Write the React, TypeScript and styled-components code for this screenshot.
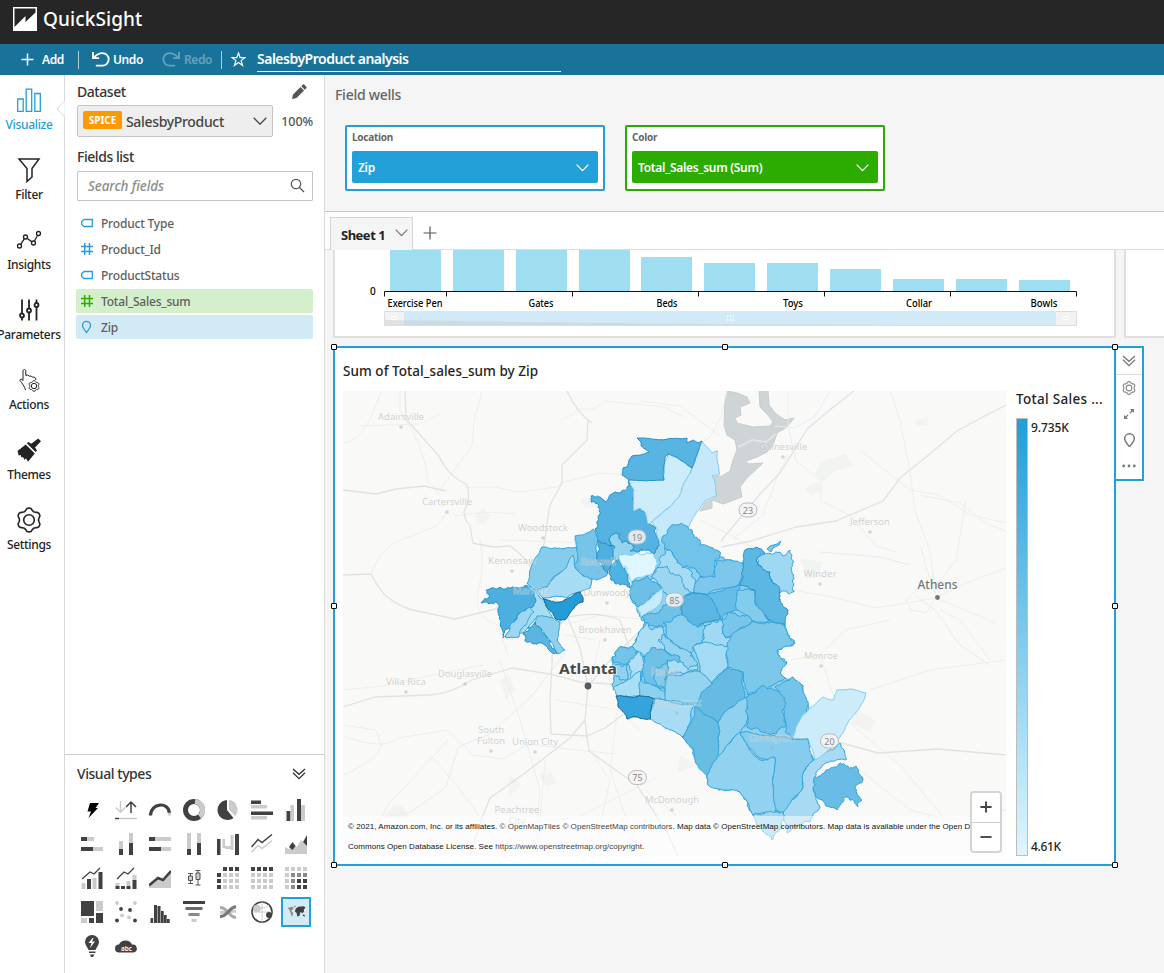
import React from 'react';
import styled, { createGlobalStyle } from 'styled-components';

const Global = createGlobalStyle`
  * { box-sizing: border-box; }
  body { margin: 0; background: #f5f5f5; font-family: "Noto Sans", "Open Sans", sans-serif; color: #232323; }
`;

const Page = styled.div`
  width: 1164px; height: 973px; overflow: hidden;
  display: flex; flex-direction: column;
`;
const Header = styled.header`
  height: 44px; flex: none; background: #262626; color: #fff;
  display: flex; align-items: center; gap: 6px; padding: 0 0 7px 13px;
`;
const Brand = styled.span`font-size: 19px; font-weight: 500; letter-spacing: 0.1px; line-height: 24px;`;
const Toolbar = styled.div`
  height: 31px; flex: none; background: #19729a; color: #fff;
  display: flex; align-items: center; font-size: 12px; font-weight: 600;
`;
const Tool = styled.div<{ $w: number; $pad: number; $gap: number; $dim?: boolean }>`
  width: ${p => p.$w}px; padding-left: ${p => p.$pad}px; gap: ${p => p.$gap}px;
  display: flex; align-items: center; letter-spacing: -0.4px; white-space: nowrap; padding-bottom: 1px;
  opacity: ${p => (p.$dim ? 0.33 : 1)};
`;
const Rule = styled.i`width: 1px; height: 18px; background: #b9c9d1;`;
const AnalysisName = styled.div`
  width: 304px; height: 26px; margin-left: 11px; margin-top: -1px; border-bottom: 1px solid #fff;
  font-size: 14px; font-weight: 600; letter-spacing: -0.5px; line-height: 26px;
`;
const Body = styled.div`flex: 1; display: flex; min-height: 0;`;

const Nav = styled.nav`width: 65px; flex: none; background: #fff; border-right: 1px solid #d9d9d9; position: relative;`;
const NavNotch = styled.svg`position: absolute; right: -1px; top: 25px;`;
const NavItem = styled.div<{ $on?: boolean }>`
  height: 70px; width: 58px; padding-top: 12px; display: flex; flex-direction: column; align-items: center;
  color: ${p => (p.$on ? '#239fd9' : '#232323')};
  svg { flex: none; }
`;
const NavLabel = styled.span`font-size: 12px; font-weight: 500; letter-spacing: -0.32px; line-height: 16px; margin-top: 4px; white-space: nowrap;`;

const Side = styled.aside`
  width: 260px; flex: none; background: #fff; border-right: 1px solid #d9d9d9;
  display: flex; flex-direction: column;
`;
const DataPanel = styled.section`height: 680px; border-bottom: 1px solid #ccc; padding: 6px 11px 0 12px; flex: none;`;
const Row = styled.div`display: flex; align-items: center; justify-content: space-between;`;
const DatasetHead = styled(Row)`padding-right: 6px; margin-bottom: 2px;`;
const TypesHead = styled(Row)`padding-right: 7px;`;
const PanelTitle = styled.h3<{ $mt?: number }>`
  margin: ${p => p.$mt ?? 0}px 0 0; font-size: 14px; font-weight: 500; letter-spacing: -0.45px; line-height: 22px; color: #333;
`;
const DatasetSelect = styled.div`
  width: 196px; height: 32px; background: #eee; border: 1px solid #c4c4c4; border-radius: 2px;
  display: flex; align-items: center; padding: 0 5px;
`;
const Spice = styled.span`
  width: 39px; height: 18px; background: #ff9900; color: #fff; border-radius: 2px; text-align: center;
  font-size: 10px; font-weight: 700; line-height: 18px; margin-top: -2px;
`;
const DatasetName = styled.span`flex: 1; margin-left: 4px; font-size: 14px; font-weight: 500; letter-spacing: -0.33px; color: #444;`;
const Percent = styled.span`font-size: 12.5px; font-weight: 500; letter-spacing: -0.1px; color: #555;`;
const Search = styled.div`
  height: 30px; border: 1px solid #c4c4c4; border-radius: 1px; margin-top: 3px; padding: 0 7px 1px 10px;
  display: flex; align-items: center; justify-content: space-between;
  font-style: italic; font-weight: 500; font-size: 13.5px; letter-spacing: -0.1px; color: #8c8c8c;
`;
const FieldList = styled.div`margin: 10px 0 0 -1px; display: flex; flex-direction: column; gap: 2px;`;
const FieldRow = styled.div<{ $bg?: string }>`
  height: 24px; border-radius: 2px; background: ${p => p.$bg ?? 'transparent'};
  display: flex; align-items: center; gap: 7px; padding-left: 4px;
  font-size: 12px; font-weight: 500; letter-spacing: -0.2px; color: #5e5e5e;
`;
const TypesPanel = styled.section`padding: 8px 11px 0 12px; flex: 1;`;
const TypeGrid = styled.div`
  display: grid; grid-template-columns: repeat(7, 34px); grid-auto-rows: 34px; margin: 8px 0 0 -2px;
`;
const TypeCell = styled.div<{ $on?: boolean }>`
  width: 30px; height: 30px; margin: 2px; display: flex; align-items: center; justify-content: center;
  background: ${p => (p.$on ? '#d3ebf7' : 'transparent')};
  border: ${p => (p.$on ? '2px solid #22a0d8' : '0')};
  svg { flex: none; }
`;

const Main = styled.main`flex: 1; min-width: 0; display: flex; flex-direction: column; overflow: hidden;`;
const Wells = styled.section`height: 137px; flex: none; border-bottom: 1px solid #c9c9c9; padding: 9px 10px 0;`;
const WellsTitle = styled.div`font-size: 14px; letter-spacing: -0.27px; line-height: 22px; color: #666; font-weight: 500;`;
const WellRow = styled.div`display: flex; gap: 20px; padding: 19px 0 0 10px;`;
const Well = styled.div<{ $c: string }>`
  width: 260px; height: 66px; background: #fff; border: 2px solid ${p => p.$c}; border-radius: 2px; padding: 2px 5px;
`;
const WellLabel = styled.div`font-size: 10px; font-weight: 700; color: #666; line-height: 16px; letter-spacing: -0.25px;`;
const WellValue = styled.div<{ $c: string }>`
  height: 32px; margin-top: 6px; background: ${p => p.$c}; border-radius: 2px; color: #fff; padding: 0 9px 0 6px;
  display: flex; justify-content: space-between; align-items: center; font-size: 12px; font-weight: 600; letter-spacing: -0.3px;
  svg { margin-top: 2px; }
`;
const Tabs = styled.div`height: 38px; flex: none; background: #fff; border-bottom: 1px solid #ddd; display: flex; padding: 5px 0 0 5px; align-items: flex-start;`;
const Tab = styled.div`
  width: 83px; height: 33px; background: #f5f5f5; border: 1px solid #d5d5d5; border-bottom: 0;
  display: flex; align-items: center; justify-content: space-between; padding: 2px 4px 0 10px;
  font-size: 13px; font-weight: 700; letter-spacing: -0.5px;
  svg { margin-bottom: 4px; }
`;
const AddTab = styled.div`padding: 9px 0 0 10px; line-height: 0;`;

const Sheet = styled.div`flex: 1; padding-left: 8px; display: flex; flex-direction: column; gap: 8px;`;
const SheetRow = styled.div`display: flex; gap: 8px; align-items: flex-start;`;
const Visual = styled.div`width: 783px; height: 88px; flex: none; background: #fff; border: 2px solid #e0e0e0; border-top: 0; line-height: 0;`;
const Selected = styled.div`
  width: 783px; height: 520px; flex: none; background: #fff; border: 2px solid #22a0d8; position: relative; padding: 12px 8px 8px;
`;
const HandleLayer = styled.div`position: absolute; inset: -1px;`;
const Handle = styled.i<{ $x: string; $y: string }>`
  position: absolute; left: ${p => p.$x}; top: ${p => p.$y}; width: 6px; height: 6px; margin: -3px;
  background: #fff; border: 1px solid #000; border-radius: 1px;
`;
const VisualTitle = styled.div`font-size: 13.5px; font-weight: 500; letter-spacing: 0.04px; line-height: 22px; height: 31px;`;
const VisualBody = styled.div`display: flex; gap: 10px;`;
const MapFrame = styled.div`width: 663px; height: 465px; flex: none; position: relative; overflow: hidden; svg { display: block; }`;
const Credit = styled.div`
  position: absolute; left: 0; right: 0; bottom: 0; height: 40px; background: rgba(255,255,255,0.5);
  padding: 1px 5px; font: 8px/20px "Liberation Sans", Arial, sans-serif; letter-spacing: 0.05px; color: #111; white-space: nowrap;
  a { color: #444; }
`;
const ZoomBox = styled.div`
  position: absolute; right: 4px; top: 400px; width: 32px; height: 62px; background: #fff; border: 2px solid #d4d4d4; border-radius: 4px;
  display: flex; flex-direction: column;
  div { flex: 1; display: flex; align-items: center; justify-content: center; }
  div + div { border-top: 1px solid #ccc; }
`;
const Legend = styled.div`width: 92px; flex: none; display: flex; flex-direction: column;`;
const LegendTitle = styled.div`font-size: 13.5px; font-weight: 500; letter-spacing: 0.3px; line-height: 17px; white-space: nowrap; margin-bottom: 10px;`;
const LegendScale = styled.div`height: 438px; display: flex; gap: 3px;`;
const Ramp = styled.div`width: 12px; border: 1px solid #bdbdbd; background: linear-gradient(#209fd8, #dff5ff);`;
const RampLabels = styled.div`display: flex; flex-direction: column; justify-content: space-between; font-size: 12px; font-weight: 500; letter-spacing: -0.1px; line-height: 19px; span + span { letter-spacing: -0.35px; }`;
const VisualTools = styled.div`
  width: 28px; height: 135px; background: #fff; border: 2px solid #22a0d8; border-left: 0; margin-left: -8px;
  display: flex; flex-direction: column; align-items: center;
  svg { flex: none; }
`;
const ToolSlot = styled.div<{ $first?: boolean }>`
  height: ${p => (p.$first ? 27 : 26)}px; width: 100%; display: flex; align-items: center; justify-content: center;
  border-bottom: ${p => (p.$first ? '1px solid #ddd' : '0')};
`;

/* ---------- small icons ---------- */
const Chevron = ({ c = '#444', w = 14 }: { c?: string; w?: number }) => (
  <svg width={w} height={w * 0.57} viewBox="0 0 14 8" fill="none" stroke={c} strokeWidth="1.3"><path d="M.7.7 7 7.2 13.3.7" /></svg>
);
const DoubleChevron = ({ c = '#333' }: { c?: string }) => (
  <svg width="14" height="12" viewBox="0 0 14 12" fill="none" stroke={c} strokeWidth="1.3"><path d="M1 1l6 5.3L13 1M1 4.8l6 5.8 6-5.8" /></svg>
);
const gearPath = (cx: number, cy: number, r: number, a: number) =>
  'M' + Array.from({ length: 72 }, (_, i) => {
    const t = (i * Math.PI) / 36;
    const q = Math.cos(6 * t);
    const rr = r + a * (q > 0 ? Math.sqrt(q) : -Math.pow(-q, 0.8));
    return `${(cx + rr * Math.sin(t)).toFixed(2)} ${(cy - rr * Math.cos(t)).toFixed(2)}`;
  }).join('L') + 'Z';
const Cog = ({ s = 24, c = 'currentColor', w = 1.4 }: { s?: number; c?: string; w?: number }) => (
  <svg width={s} height={s} viewBox="0 0 24 24" fill="none" stroke={c} strokeWidth={w} strokeLinejoin="round">
    <path d={gearPath(12, 12, 9.9, 1.1)} />
    <circle cx="12" cy="12" r="4.9" />
  </svg>
);
const Plus = ({ c, s = 14, w = 1.6 }: { c: string; s?: number; w?: number }) => (
  <svg width={s} height={s} viewBox="0 0 14 14" stroke={c} strokeWidth={w}><path d="M7 .5v13M.5 7h13" /></svg>
);
const Pin = ({ c, s = 12 }: { c: string; s?: number }) => (
  <svg width={s} height={s * 1.15} viewBox="0 0 12 14" fill="none" stroke={c} strokeWidth="1.4"><path d="M6 13C3.500 9.800 1.500 7.500 1.500 5.300a4.500 4.500 0 0 1 9 0C10.500 7.500 8.500 9.800 6 13Z" /></svg>
);
const Tag = () => (
  <svg width="14" height="12" viewBox="0 0 14 12" fill="none" stroke="#239fd9" strokeWidth="1.3"><path d="M4.200 2.500h8.100v7H4.200L1.700 7.500v-3Z" /></svg>
);
const Hash = ({ c }: { c: string }) => (
  <svg width="14" height="12" viewBox="0 0 14 12" fill="none" stroke={c} strokeWidth="1.5"><path d="M4.700 0v12M9.500 0v12M1 3.500h12M1 8.500h12" /></svg>
);

const navItems: { label: string; on?: boolean; icon: React.ReactNode }[] = [
  { label: 'Visualize', on: true, icon: <g strokeWidth="1.3"><path d="M.7 11h5.500v12.300H.7ZM9.200 1.200h5.500v22.100H9.200ZM17.800 5.500h5.500v17.800h-5.500Z" /></g> },
  { label: 'Filter', icon: <path strokeWidth="1.5" d="M2 1h20l-7 9.500v8.500l-5 4.500v-13Z" /> },
  { label: 'Insights', icon: <g strokeWidth="1.3"><circle cx="2.500" cy="18" r="2" /><circle cx="8.500" cy="9" r="2" /><circle cx="16.500" cy="15" r="2" /><circle cx="21.500" cy="5.500" r="2" /><path d="M3.700 16.400l3.700-5.700M10 10.300l5 3.600M17.300 13.200l3.400-5.900" /></g> },
  { label: 'Parameters', icon: <g strokeWidth="1.8"><path d="M5 1.500v14M5 19.500v3M12 1.500v9M12 14.500v8M19.500 1.500v3.500M19.500 9v13.500" /><circle cx="5" cy="17.500" r="2" /><circle cx="12" cy="12.500" r="2" /><circle cx="19.500" cy="7" r="2" /></g> },
  { label: 'Actions', icon: <g strokeWidth="1"><path d="M8.500 22C7.500 18 5.500 16 3 12.500c0-1.800 1.500-1.800 3 0V3c0-2 2.800-2 2.800 0v4.500l2-.5 1.500 1.200 2-.2 1 1.200 2-.2 1.500 2v1" /><path d={gearPath(17, 18, 4.800, 0.6)} /><circle cx="17" cy="18" r="2.700" /></g> },
  { label: 'Themes', icon: <g fill="currentColor" stroke="none"><path d="M21.200.5 24 3.300l-6 6.200 2 3-1.500 1.500L9.800 5.300 11.300 4l3 1.800Z" /><path d="M8.700 6.500l9.100 9.100L11 23.800l-2-3.600-1.300 1.700-1.800-3-1.500.7-.7-2.600-2 .4L.5 13Z" /></g> },
  { label: 'Settings', icon: null },
];

const D = '#414141', L = '#cbcbcb', M = '#8a8a8a';
type R = [number, number, number, number, string];
const rects = (list: R[]) => list.map(([x, y, w, h, f], i) => <rect key={i} x={x} y={y} width={w} height={h} fill={f} />);
const cells = (f: (c: number, r: number) => string | null) => {
  const out: R[] = [];
  for (let r = 0; r < 4; r++) for (let c = 0; c < 4; c++) { const k = f(c, r); if (k) out.push([c * 6, r * 6, 4, 4, k]); }
  return rects(out);
};
const typeIcons: React.ReactNode[] = [
  <path d="M9 4h9l-3.500 5H17L7.500 19l2.500-6.500H6.500Z" fill="#000" />,
  <g fill="none" strokeWidth="1.5"><path stroke={L} d="M5.500 2v11M.8 8.500l4.700 4.800 4.700-4.800" /><path stroke={D} d="M16 14V3M11 8l5-5 5 5" /><path stroke={L} d="M4 19.500h18" /><path stroke={D} d="M0 19.500h4" /></g>,
  <g fill="none" strokeWidth="3.2"><path stroke={D} d="M1.500 16.500C1.500 3.500 20 2.500 20.300 14" /><path stroke={L} d="M20.300 13.700v2.800" /></g>,
  <g fill="none" strokeWidth="5"><circle cx="11" cy="11" r="8.500" stroke={D} /><path stroke={L} d="M12 2.500a8.500 8.500 0 0 1 4.500 15" /></g>,
  <g><path fill={D} d="M10 1a10 10 0 1 0 6.500 18L10 11Z" /><path fill={L} d="M12 .8a10 10 0 0 1 6 16.500l-6-7Z" /></g>,
  rects([[0, 1.5, 10, 3.5, D], [0, 6, 16, 3.5, L], [0, 12.5, 22, 3.5, D], [0, 17, 16, 3.5, L]]),
  rects([[1.5, 12, 4, 10, D], [5.5, 6, 3.5, 16, L], [12, 0, 4, 22, D], [16, 6, 4, 16, L]]),
  rects([[0, 4, 6, 4, D], [6, 4, 7, 4, L], [0, 14, 12, 4, D], [12, 14, 10, 4, L]]),
  rects([[4, 8, 4, 8, L], [4, 16, 4, 6, D], [14, 0, 4, 10, L], [14, 10, 4, 12, D]]),
  rects([[0, 4, 6, 4, D], [6, 4, 16, 4, L], [0, 14, 12, 4, D], [12, 14, 10, 4, L]]),
  rects([[4, 0, 4, 16, L], [4, 16, 4, 6, D], [14, 0, 4, 10, L], [14, 10, 4, 12, D]]),
  <g>{rects([[0, 6, 3.5, 16, D], [5.5, 6, 2.5, 9, L], [8, 13, 6, 3, L], [13.5, 2, 3, 15, L], [18, 1, 4, 21, D]])}</g>,
  <g fill="none" strokeWidth="1.5"><path stroke={D} d="M.5 14 7 6.500l4 3 10-8" /><path stroke={L} d="M.5 19 7 12.500l4 3 10-8" /></g>,
  <g><path fill={L} d="M0 20v-6l4 2 4-5 4 3 4-7 6 6v8H0Z" /><path fill={D} d="M4 14l3.500-5 3 4-3 4ZM18 9l4-7v11Z" /></g>,
  <g>{rects([[.5, 16, 4, 6, L], [6, 12, 4, 10, D], [11.5, 11, 4, 11, L], [17.5, 5, 4, 17, D]])}<path fill="none" stroke={D} strokeWidth="1.3" d="M1 12 9 5l4 2 6-6" /></g>,
  <g>{rects([[.5, 16, 4, 3, L], [.5, 19, 4, 3, D], [6, 19, 4, 3, D], [11.5, 14, 4, 5, L], [11.5, 19, 4, 3, D], [17.5, 8, 4, 6, L], [17.5, 13, 4, 9, D]])}<path fill="none" stroke={D} strokeWidth="1.3" d="M2 12 9 5l4 2 6-6" /></g>,
  <g><path fill={L} d="M0 20 9 12l5 2 8-9v16H0Z" /><path fill="none" stroke={D} strokeWidth="2.5" d="M0 18.500 9 11l5 2 8-9" /></g>,
  <g fill="none" stroke="#555"><path d="M5 6.500h5M5 16.500h5M7.500 6.500V9M7.500 13.500V16M12.500 3.500h5M12.500 18h5M15 3.500V6M15 12.500v5.500" /><path fill={L} d="M5.500 9h4v4.500h-4ZM13 6h4v6.500h-4Z" /></g>,
  <g>{cells((c, r) => (c === 0 && r === 0 ? null : c === 0 || r === 0 ? D : L))}</g>,
  <g>{cells((_, r) => (r === 0 ? D : L))}</g>,
  <g>{cells((c, r) => ((c >= 2 && r === 3) || (c === 3 && r === 2) || (c === 2 && r === 2) ? D : r >= 1 && c >= 1 ? M : L))}</g>,
  rects([[0, 0, 13, 15, D], [15, 0, 7, 10, L], [15, 12, 7, 10, D], [0, 17, 6, 5, L], [8, 17, 5, 5, D]]),
  <g>{([[2, 2, L], [20, 2, L], [6, 8, D], [15, 9, D], [7, 14.5, L], [14, 16.5, L], [2, 19.5, D], [20, 19.5, D]] as [number, number, string][]).map(([x, y, f], i) => <circle key={i} cx={x} cy={y} r="1.9" fill={f} />)}</g>,
  rects([[1.5, 17, 2.7, 5, D], [5, 4, 3, 18, D], [8.5, 5, 3, 17, D], [12, 10, 2.7, 12, D], [15, 14, 2.7, 8, D], [18, 18, 2.7, 4, D]]),
  rects([[0, 0, 22, 3, D], [2.5, 6, 17, 3, '#6a6a6a'], [5.5, 12, 11, 3, M], [8.5, 18, 5, 3, L]]),
  <g fill="none" strokeWidth="3"><path stroke={L} d="M3 11.500c7 0 9-2 16-1" /><path stroke="#aaa" d="M3 6.500c8 0 9 10 16 10" /><path stroke="#777" d="M3 15.500c8 0 8-8.500 16-10" /></g>,
  <g><circle cx="11" cy="11" r="10" fill="#fff" stroke={D} strokeWidth="1.6" /><path fill="none" stroke={L} d="M11 1v20M1.500 11h19M5 4c4 4 9 4 13 0" /><circle cx="6" cy="7.500" r="3.800" fill={L} /><circle cx="18" cy="14" r="3" fill={D} /></g>,
  <g transform="translate(2.500 2) scale(.82)"><path fill={M} d="M0 6l6-1.500 1.500 2-3 3 2.500 3-1.500 4.500-1.500-4-1.500-4.500ZM7 4l3.500-.5-1.500 2Z" /><path fill={D} d="M10 7l3-2.500 7-.5 2 1.500-2 2.500v3l-2.500 1.500-1-1.500-1 .5-1 4.500-2.500.5-1-4.500-2-1.500ZM18.500 14l2.500.5.5 2-2.500-.5Z" /></g>,
  <g><path fill={D} d="M11 0a7 7 0 0 0-7 7c0 3 2.500 5 3.500 8h7c1-3 3.500-5 3.500-8a7 7 0 0 0-7-7ZM8 16.500h6.500V18H8ZM9 19.500h4.500L12 22h-2Z" /><path fill="#fff" d="M11.500 3 7.500 8h3L9 13l5-6.500h-3l1.500-3.500Z" /></g>,
  <g><path fill={D} d="M4 17.500a4 4 0 0 1 0-8A7 6.500 0 0 1 17 9.500a4 4 0 0 1 1.500 8Z" /><text x="11.500" y="15.800" fontSize="6.500" fontWeight="600" fill="#fff" textAnchor="middle">abc</text></g>,
];

/* ---------- bar chart ---------- */
const barTops = [240, 240, 240, 240, 257, 263, 263, 269, 279, 279, 280];
const barX = [390, 453, 516, 579, 641, 704, 767, 830, 893, 956, 1019];
const barNames: [string, number, number][] = [['Exercise Pen', 415, 55], ['Gates', 541, 25], ['Beds', 667, 21], ['Toys', 793, 20], ['Collar', 919, 26], ['Bowls', 1044, 27]];
const BarChart = () => (
  <svg width="779" height="86" viewBox="335 250 779 86">
    {barX.map((x, i) => <rect key={x} x={x} y={barTops[i]} width="51" height={291 - barTops[i]} fill="#9fdef1" />)}
    <path d="M384.500 296.500v-5h692v5M446.500 291.500v5M572.500 291.500v5M698.500 291.500v5M824.500 291.500v5M950.500 291.500v5" fill="none" stroke="#111" />
    <text x="370" y="294.500" fontSize="10" fontWeight="500">0</text>
    {barNames.map(([n, x, w]) => <text key={n} x={x} y="307" fontSize="10" fontWeight="500" textAnchor="middle" textLength={w} lengthAdjust="spacingAndGlyphs">{n}</text>)}
    <rect x="384.500" y="311.500" width="692" height="14" fill="#f2f2f2" stroke="#ddd" />
    <rect x="404" y="311" width="652" height="14" fill="#d2eaf7" />
    <path d="M385 320 520 322l180 2 200 1H385Z" fill="#bbb" opacity=".3" />
    <path d="M727 316h7M727 320h7" stroke="#fff" strokeWidth="1.5" strokeDasharray="1.500 1.300" />
    <path d="M391 316.500h6M391 319.500h6M1063 316.500h6M1063 319.500h6" stroke="#fff" strokeWidth="1" />
  </svg>
);

/* ---------- map ---------- */
type P = [number, number];
const parse = (s: string): P[] => s.trim().split(/\s+/).map(t => t.split(',').map(Number) as P);
const noise = (a: number, b: number) => { const v = Math.sin(a * 12.9898 + b * 78.233) * 43758.5453; return (v - Math.floor(v)) * 2 - 1; };
const split = (a: P, b: P, k: number): P[] => {
  const dx = b[0] - a[0], dy = b[1] - a[1], len = Math.hypot(dx, dy);
  if (len < 1.9) return [a];
  const n = noise(a[0] + b[0], a[1] + b[1]) * Math.min(len * k, 2);
  const s = dx > 0 || (dx === 0 && dy > 0) ? 1 : -1;
  const m: P = [(a[0] + b[0]) / 2 - (dy / len) * n * s, (a[1] + b[1]) / 2 + (dx / len) * n * s];
  return [...split(a, m, k), ...split(m, b, k)];
};
const coast = (s: string, k = 0.17) => {
  const pts = parse(s);
  const out = pts.flatMap((p, i) => split(p, pts[(i + 1) % pts.length], k));
  return 'M' + out.map(p => `${p[0].toFixed(1)} ${p[1].toFixed(1)}`).join('L') + 'Z';
};
const zones: [string, string, number?][] = [
  ['#8fd1ef', '612,658 620,647 633,647 637,637 645,622 641,617 632,600 632,582 650,560 662,537 680,524 700,545 717,555 743,565 770,560 780,602 785,625 795,643 777,650 787,663 780,673 785,678 802,685 808,712 800,740 815,760 803,787 783,813 753,815 740,792 708,785 707,775 683,738 655,715 640,697 613,690'],
  ['#96d3ef', '609,541 610,534 617,532 622,536 640,530 652,545 637,553 625,558 616,562 612,554'],
  ['#54b3e3', '629,480 634,490 634,511 640,508 645,512 648,524 656,528 660,545 655,553 640,550 630,551 634,547 628,542 622,543 620,534 612,535 609,541 614,547 605,546 597,537 595,529 598,526 598,504 591,502 591,496 600,497 605,502 612,494 620,493 627,487'],
  ['#ceedfb', '664,480 664,462 669,454 676,457 684,462 692,468 686,480 682,488 679,497 670,507 660,515 652,522 648,524 645,512 640,508 634,511 634,490 629,480', 0.06],
  ['#c5e9fa', '702,441 707,447 712,453 718,451 719,475 712,476 716,485 716,496 706,500 700,508 691,522 689,527 680,524 673,530 663,537 660,546 657,528 652,522 660,515 670,507 679,497 682,488 686,480 692,468 698,452', 0.09],
  ['#58b5e2', '637,438 687,438 687,443 693,440 698,443 702,441 698,452 695,461 692,468 684,462 676,457 669,454 665,457 664,480 629,480 625,477 622,475 623,468 627,467 629,460 632,456 640,455 649,452 645,449 641,446 641,442', 0.05],
  ['#76c4ea', '575,536 590,532 593,529 598,541 598,562 608,573 606,576 597,580 587,578 580,574 574,565 576,553 577,547', 0.1],
  ['#4fafde', '598,540 605,543 615,547 613,553 613,560 608,573 598,562'],
  ['#4fb3e2', '614,563 620,559 625,568 628,575 630,588 620,585 611,580 609,574'],
  ['#dff5ff', '618,555 637,553 652,553 657,565 655,573 643,577 632,582 627,573 627,568 621,563', 0.24],
  ['#86ccec', '527,583 530,570 536,557 542,547 577,547 577,562 567,570 553,577 547,587 533,590', 0.09],
  ['#a6dcf4', '573,555 575,568 583,576 592,580 590,588 580,592 567,598 543,598 537,590 547,587 555,576 566,568', 0.1],
  ['#a6dcf4', '527,585 535,590 540,598 547,600 553,620 537,617 528,627 523,633 505,637 515,622 527,607', 0.09],
  ['#4dafdf', '481,603 490,596 486,590 503,589 525,585 534,592 535,603 530,608 515,620 503,638 498,612 497,602'],
  ['#9dd7f1', '505,637 510,625 520,613 530,607 534,612 528,620 522,628 519,637', 0.13],
  ['#249dd7', '543,598 560,602 580,592 583,602 570,613 565,620 555,618', 0.12],
  ['#8fd0ef', '537,616 553,618 560,622 557,640 565,650 557,654 547,637 535,625', 0.1],
  ['#5cb5e1', '523,633 535,622 547,637 557,653 540,643 525,640'],
  ['#72c3e9', '662,537 668,533 670,527 680,524 688,527 692,533 700,540 700,545 717,550 720,555 715,560 713,577 700,577 692,568 677,563 673,553 665,548'],
  ['#7cc7eb', '692,593 695,583 700,577 715,577 717,563 715,560 730,560 743,563 745,568 742,577 738,585 723,588 707,595', 0.12],
  ['#9ed8f2', '757,556 765,554 780,552 783,556 790,550 793,563 792,573 794,592 780,593 773,583 770,572 758,565'],
  ['#5cb8e2', '743,565 745,550 757,547 765,553 757,558 758,565 770,572 773,583 780,590 780,602 788,610 785,625 773,622 763,612 755,603 755,590 740,585', 0.16],
  ['#a5dbf3', '655,575 657,568 663,555 665,548 673,553 677,563 690,570 695,583 692,593 685,598 670,598 662,590 650,582'],
  ['#9ad6f1', '651,577 657,568 667,566 670,573 681,577 684,587 691,592 685,598 670,598 662,590'],
  ['#6cc0e8', '632,600 632,582 647,576 652,582 662,589 650,597 637,607', 0.16],
  ['#c8eafa', '637,608 663,588 662,600 656,608 641,617', 0.08],
  ['#6fc1e8', '642,617 660,610 668,603 683,598 683,617 668,625 663,627 655,627 645,622'],
  ['#5cb6e1', '682,599 692,593 707,595 717,608 720,620 710,622 697,628 683,620', 0.14],
  ['#66bde7', '707,595 740,585 737,597 737,610 727,613 721,620 717,608', 0.12],
  ['#84ccec', '737,590 755,590 755,603 763,612 770,622 762,622 752,621 743,613 737,610', 0.14],
  ['#8bcfee', '663,623 682,615 697,627 707,627 702,643 693,647 690,655 680,647 667,637'],
  ['#a1d9f2', '707,625 722,620 725,637 737,638 728,647 713,648 702,643'],
  ['#78c6ea', '722,620 727,613 747,615 752,622 738,630 737,638 725,637', 0.18],
  ['#7cc8eb', '738,630 752,622 772,622 782,624 795,643 777,650 787,663 780,673 785,678 773,685 747,695 743,672 728,667 727,643', 0.12],
  ['#a9def5', '633,650 637,637 647,623 653,630 663,628 663,640 680,648 693,657 698,672 680,672 667,675 650,660'],
  ['#95d4f1', '658,640 663,634 676,645 690,652 697,665 688,670 680,661 670,654'],
  ['#a3dbf4', '693,647 702,643 728,647 728,667 712,683 700,672 697,657', 0.13],
  ['#6fc1e8', '643,657 655,647 667,653 680,657 678,663 667,660 667,690 655,685 645,682'],
  ['#83cbed', '655,668 667,662 667,686 657,686'],
  ['#74c4e9', '612,658 620,647 633,647 637,655 627,663 614,663'],
  ['#b0e0f5', '628,664 637,652 643,657 643,672 632,678'],
  ['#8fd1ef', '615,665 628,665 628,678 620,680 615,675'],
  ['#a9def4', '613,688 626,681 636,673 642,671 640,696 617,696', 0.1],
  ['#8ed1ef', '641,672 643,683 655,686 665,692 665,700 640,697', 0.12],
  ['#95d4f1', '667,675 698,671 712,684 700,698 697,703 665,700 665,690', 0.12],
  ['#a9dcf4', '655,699 694,705 690,723 683,737 670,730 650,719', 0.09],
  ['#33a4dc', '616,696 630,697 643,696 655,699 650,719 637,717 627,719 618,707', 0.11],
  ['#65bbe4', '698,703 702,692 714,680 728,668 743,673 745,697 730,708 718,722 695,707', 0.12],
  ['#68bde5', '695,707 718,722 718,760 707,775 695,762 693,748 683,738', 0.11],
  ['#90d1ef', '718,722 730,708 747,697 747,720 740,732 718,760', 0.12],
  ['#76c4ea', '775,687 793,677 802,685 808,702 807,715 800,722 793,740 785,732 780,703', 0.16],
  ['#6fc1e8', '747,697 763,685 775,690 786,703 785,727 770,735 748,728'],
  ['#a8dbf3', '840,743 846,760 823,765 815,777 813,790 820,807 810,822 787,833 783,813 803,787 802,777 813,760', 0.15],
  ['#cdecfa', '793,738 800,720 810,708 823,697 833,700 837,690 850,689 866,693 840,737 832,747 815,760 808,739', 0.06],
  ['#86ccee', '740,732 793,740 808,739 813,760 802,777 803,787 783,813 773,810 773,777 775,758 760,758 747,745', 0.1],
  ['#90d2f0', '740,732 747,745 760,760 775,757 773,777 775,813 753,815 740,792 708,785 707,775', 0.1],
  ['#a0d5ee', '753,815 783,812 782,827 772,840 760,828'],
  ['#68bce6', '815,777 825,772 840,763 853,768 856,766 863,780 855,788 862,800 858,807 847,797 837,810 825,803 815,793', 0.24],
];
const strokeFor = (fill: string) => {
  if (fill === '#249dd7' || fill === '#33a4dc') return '#13628c';
  if (/^#[45]/.test(fill)) return '#218fc4';
  if (/^#[c-d]/.test(fill)) return '#7cccf2';
  return '#2fa3da';
};
const majorRoads = [
  'M343 490l33 4 20-5 28-3 22 5M405 391l1 28 33 37q9 20 27 28 6 10-2 28 1 10 6 13l3 18 4 1 17 3 16-1q15 10 22 24',
  'M343 575l28-1q6 12 14 21 14 12 28 15l42 9 40-10 10-8',
  'M567 391q10 22 25 32M588 420l-1 20-25 25v18l-12 22-4 25q0 12-8 32-10 15 2 25',
  'M1006 405l-27 14-22 12-26 22-31 25-17 23-47 20-40 6-45 14-30 6',
  'M854 391l-23 18-24 20-17 28-10 16-19 20-40 48',
  'M343 707l32-10 55-2q20-1 42-15l40-12 38 6 30 8 45 3M588 686l-8-38-12-30-15-22-10-10M588 686l24-28 26-25 20-22 22-20 20-20M588 686l-3 35 4 30 35 25 12 8 32 50 10 22M585 720l-15 18-45 35-35 25-8 20-12 38',
  'M565 618q30-8 55 2l10 30-2 28-3 35-20 15-18 8-36-2-1-35 2-35q0-30 13-46',
  'M838 742l40 11 60-4 68 6',
];
const minorRoads = [
  'M381 391q-15 50-38 52M400 391v20q25 35 28 70l12 14M482 391l-8 30-2 25-32 44M360 426l60-2 20-10M371 574q10-30 40-38l26-10 10-14M455 516l30-4 30 2M480 540q5 30-2 50-5 28 20 35l10 30M343 690l40-4 40-9 60-12M343 736q40 15 55 2l50-8 25 25 30 4 25-15 40 5 48 5',
  'M464 487l30 0 25 5 38-5 5-4M560 420l12-5 6-6 16 0 10-8 60 6 20 10M500 540l65 2 40 0M560 483l40-10 25 2',
  'M500 660l20 60 20 70-5 60M448 740l-60 65-25 50M430 755q50 55 70 95',
  'M727 391l-6 25-10 20-8 6M788 391l0 35 8 35 25 20 0 20 30 15 25 30 20 6M700 520l40 20 20 12M860 450l50 40 30 5 30 20 36 8M788 455l-10 20-15 40-30 24M640 401l40 5 40 30',
  'M890 391l10 30 10 50 5 40 15 40 6 46M936 597l-10-30-5-20M936 598l30-15 40-15M966 500l-10 60-20 25M920 495l40 8 25 20 21 8M936 598l60 25M936 598l-10 15-15-3-5-10 15-15M936 598l-60 10-40-10-42-8',
  'M940 610l20 10 30 40M890 620l-45 10-25 25-30 5M820 655l20 60 60 50 50 60M870 690l60-20 76-10M860 770l50 40 40 10 56-10M620 690l-10 80 20 60M545 760l-8 95M656 778l-80 40-60 5M590 750l20 30-15 70M690 830l-30-30M343 775q35-15 38-30l-5-15-33-5',
  'M650 620l-50-5-35 10M600 640l-10 45M612 688l35-15M595 640l-30-5M555 700l65 10 20 20',
];
const places: [string, number, number, number, number?][] = [
  ['Adairsville', 401, 420, 46, 1], ['Cartersville', 447, 505, 50, 1], ['Woodstock', 543, 531, 50, 1], ['Kennesaw', 512, 564, 48, 1], ['Marietta', 532, 594, 38], ['Roswell', 598, 565, 35, 1],
  ['Dunwoody', 607, 596, 47, 1], ['Brookhaven', 605, 633, 53, 1], ['Redan', 665, 675, 28, 1], ['Stonecrest', 677, 706, 48, 1], ['Covington', 772, 741, 46, 1], ['Gainesville', 783, 450, 48, 1],
  ['Jefferson', 870, 525, 40, 1], ['Winder', 820, 577, 33, 1], ['Monroe', 821, 659, 34, 1], ['Douglasville', 465, 677, 54, 1], ['Villa Rica', 406, 685, 40, 1], ['South', 491, 733, 26], ['Fulton', 491, 744, 28, 1],
  ['Union City', 535, 745, 46, 1], ['McDonough', 672, 803, 54, 1], ['Peachtree', 517, 813, 45], ['City', 517, 824, 17],
];
const shields: [string, number, number][] = [['23', 748, 510], ['19', 637, 537], ['85', 674.5, 600], ['20', 829.5, 741], ['75', 637.5, 777.5]];

const MapDrawing = () => (
  <svg width="663" height="465" viewBox="343 391 663 465">
    <rect x="343" y="391" width="663" height="465" fill="#f9f9f8" />
    <g fill="#f1f4f0">
      <path d="M820 462l25-8 8 12-20 6-10 10-8-8ZM805 488l12-6 6 8-12 6ZM475 515l8-7 7 8-5 9-8-2ZM580 500l12-4 6 12-12 0ZM500 680l10-5 4 15-8 10ZM510 775l10 8-4 8-8 5ZM540 775l12-3 4 12-10 2ZM855 708l20 12-5 12-18-8ZM915 420l14-2-3 8-10-1ZM385 815l8-10 10 2 6 10-14 2ZM800 558l22 4-3 15-12 2ZM680 755l18 10-20 8Z" />
    </g>
    <path d="M727 391 725 400 724 425 727 435 735 440 737 450 733 460 730 471 722 476 712 477 715 485 715 497 705 503 700 511 712 508 712 500 723 504 742 497 740 487 747 478 763 463 748 464 746 461 757 457 767 452 773 445 777 433 787 427 794 418 785 420 775 413 769 405 768 390 759 390 760 407 768 415 773 422 770 426 753 427 737 423 735 418 741 415 740 407 750 403 747 397 737 393Z" fill="#cfd5d7" stroke="#c6cdd0" strokeLinejoin="round" />
    <path d="M738 447l14-7 14 2 10-8" fill="none" stroke="#e0e4e5" strokeWidth="2" />
    <g fill="none" stroke="#e3eff2"><path d="M568 650l-40 50-40 35-30 12-12 40-35 25-25 5" /><path d="M830 391l-15 25-20 12-20-2M820 552l60 5 30 8M915 595l20 15 25 35 30 20M795 700l50 60" /></g>
    <g fill="none" stroke="#ececec" strokeWidth=".9" strokeLinejoin="round">{minorRoads.map((d, i) => <path key={i} d={d} />)}</g>
    <g fill="none" stroke="#e2e2e3" strokeWidth="1.3" strokeLinejoin="round">{majorRoads.map((d, i) => <path key={i} d={d} />)}</g>
    <g strokeWidth="1" strokeLinejoin="round">
      {zones.map(([f, pts, k], i) => <path key={i} d={coast(pts, k ?? 0.28)} fill={f} stroke={strokeFor(f)} />)}
      <path d="M767 549l3-3 7-2 4-3-2 4-6 3-2 4Z" fill="#7cc8eb" stroke="#2fa3da" />
    </g>
    <g fontSize="9.5" textAnchor="middle">
      {places.map(([n, x, y, w, dot]) => (
        <g key={n}>
          <text x={x} y={y} textLength={w} lengthAdjust="spacingAndGlyphs" fill="#b4b4b4" fillOpacity=".6" stroke="#fff" strokeOpacity=".22" strokeWidth="1.6" paintOrder="stroke">{n}</text>
          {dot && <circle cx={x} cy={y + 7} r="1.8" fill="#a9a9a9" fillOpacity=".45" />}
        </g>
      ))}
    </g>
    <g fontSize="9" textAnchor="middle">
      {shields.map(([n, x, y]) => (
        <g key={n}><rect x={x - 9} y={y - 7} width="18" height="14" rx="7" fill="#f4f4f4" fillOpacity=".85" stroke="#b9b9b9" /><text x={x} y={y + 3.5} fill="#888">{n}</text></g>
      ))}
    </g>
    <text x="588" y="674" fontSize="15" fontWeight="700" fill="#4a4a4a" stroke="#fff" strokeOpacity=".6" strokeWidth="2" paintOrder="stroke" textAnchor="middle" textLength="58" lengthAdjust="spacingAndGlyphs">Atlanta</text>
    <circle cx="588" cy="686" r="3.4" fill="#5a5a5a" />
    <text x="937.500" y="589" fontSize="12" fontWeight="500" fill="#777" textAnchor="middle" textLength="40" lengthAdjust="spacingAndGlyphs">Athens</text>
    <circle cx="937.500" cy="597.500" r="2.4" fill="#777" />
  </svg>
);

const fields: { name: string; bg?: string; icon: React.ReactNode }[] = [
  { name: 'Product Type', icon: <Tag /> },
  { name: 'Product_Id', icon: <Hash c="#239fd9" /> },
  { name: 'ProductStatus', icon: <Tag /> },
  { name: 'Total_Sales_sum', bg: '#d3efcc', icon: <Hash c="#2dac00" /> },
  { name: 'Zip', bg: '#d2eaf6', icon: <svg width="14" height="14" viewBox="0 0 14 14" fill="none" stroke="#239fd9" strokeWidth="1.3"><path d="M6.500 12.500C4.300 9.800 2.500 7.700 2.500 5.300a4 4 0 0 1 8 0c0 2.400-1.800 4.500-4 7.200Z" /></svg> },
];
const handles: [string, string][] = [['0%', '0%'], ['50%', '0%'], ['100%', '0%'], ['0%', '50%'], ['100%', '50%'], ['0%', '100%'], ['50%', '100%'], ['100%', '100%']];

export default function App() {
  return (
    <Page>
      <Global />
      <Header>
        <svg width="24" height="24" viewBox="0 0 24 24"><rect width="24" height="24" fill="#fff" /><path d="M1.500 1.500h21V5.500L12.500 15V9L1.500 20Z" fill="#262626" /></svg>
        <Brand>QuickSight</Brand>
      </Header>
      <Toolbar>
        <Tool $w={78} $pad={21} $gap={8}><Plus c="#fff" s={13} />Add</Tool>
        <Rule />
        <Tool $w={83} $pad={13} $gap={3}>
          <svg width="18" height="17" viewBox="0 0 19 18" fill="none" stroke="#fff" strokeWidth="2"><path d="M1 1v6.500h6.500M2 7C5 3.500 8 2.200 11 2.200a6.500 6.500 0 0 1 0 13.300H4" /></svg>Undo
        </Tool>
        <Tool $w={59} $pad={0} $gap={4} $dim>
          <svg width="18" height="17" viewBox="0 0 19 18" fill="none" stroke="#fff" strokeWidth="2"><path d="M18 1v6.500h-6.500M17 7C14 3.500 11 2.200 8 2.200a6.500 6.500 0 0 0 0 13.300h6" /></svg>Redo
        </Tool>
        <Rule />
        <Tool $w={24} $pad={9} $gap={0}>
          <svg width="15" height="15" viewBox="0 0 15 15" fill="none" stroke="#fff" strokeWidth="1.2"><path d="M7.500 1l1.700 4.600H14l-3.900 3 1.500 4.800-4.100-2.900-4.100 2.900 1.500-4.800L1 5.600h4.800Z" /></svg>
        </Tool>
        <AnalysisName>SalesbyProduct analysis</AnalysisName>
      </Toolbar>
      <Body>
        <Nav>
          <NavNotch width="9" height="18" viewBox="0 0 9 18"><path d="M9 0v18" stroke="#f5f5f5" /><path d="M8.500 0v1L1 9l7.500 8v1" fill="#fff" stroke="#d9d9d9" /></NavNotch>
          {navItems.map(n => (
            <NavItem key={n.label} $on={n.on}>
              {n.icon ? <svg width="26" height="26" viewBox="-1 -1 26 26" fill="none" stroke="currentColor">{n.icon}</svg> : <Cog s={26} c="#232323" w={1.5} />}
              <NavLabel>{n.label}</NavLabel>
            </NavItem>
          ))}
        </Nav>
        <Side>
          <DataPanel>
            <DatasetHead>
              <PanelTitle>Dataset</PanelTitle>
              <svg width="16" height="16" viewBox="0 0 16 16" fill="#555"><path d="M1 15l1-4.500 7.500-7.500 3.500 3.500L5.500 14ZM10.300 2.200l1.500-1.500c.5-.5 1-.5 1.500 0l2 2c.5.5.5 1 0 1.500l-1.500 1.500Z" /></svg>
            </DatasetHead>
            <Row>
              <DatasetSelect><Spice>SPICE</Spice><DatasetName>SalesbyProduct</DatasetName><Chevron /></DatasetSelect>
              <Percent>100%</Percent>
            </Row>
            <PanelTitle $mt={9}>Fields list</PanelTitle>
            <Search>Search fields
              <svg width="15" height="15" viewBox="0 0 15 15" fill="none" stroke="#555" strokeWidth="1.2"><circle cx="6" cy="6" r="4.700" /><path d="M9.500 9.500 14 14" /></svg>
            </Search>
            <FieldList>
              {fields.map(f => <FieldRow key={f.name} $bg={f.bg}>{f.icon}{f.name}</FieldRow>)}
            </FieldList>
          </DataPanel>
          <TypesPanel>
            <TypesHead><PanelTitle>Visual types</PanelTitle><DoubleChevron /></TypesHead>
            <TypeGrid>
              {typeIcons.map((ic, i) => <TypeCell key={i} $on={i === 27}><svg width="22" height="22" viewBox="0 0 22 22">{ic}</svg></TypeCell>)}
            </TypeGrid>
          </TypesPanel>
        </Side>
        <Main>
          <Wells>
            <WellsTitle>Field wells</WellsTitle>
            <WellRow>
              <Well $c="#22a0d8"><WellLabel>Location</WellLabel><WellValue $c="#22a0d8">Zip<Chevron c="#fff" w={13} /></WellValue></Well>
              <Well $c="#2dac00"><WellLabel>Color</WellLabel><WellValue $c="#2dac00">Total_Sales_sum (Sum)<Chevron c="#fff" w={13} /></WellValue></Well>
            </WellRow>
          </Wells>
          <Tabs>
            <Tab>Sheet 1<Chevron c="#777" w={13} /></Tab>
            <AddTab><Plus c="#555" w={1.2} /></AddTab>
          </Tabs>
          <Sheet>
            <SheetRow>
              <Visual><BarChart /></Visual>
              <Visual />
            </SheetRow>
            <SheetRow>
              <Selected>
                <VisualTitle>Sum of Total_sales_sum by Zip</VisualTitle>
                <VisualBody>
                  <MapFrame>
                    <MapDrawing />
                    <Credit>
                      © 2021, Amazon.com, Inc. or its affiliates. <a>© OpenMapTiles</a> <a>© OpenStreetMap contributors</a>. Map data © OpenStreetMap contributors. Map data is available under the Open D<br />
                      Commons Open Database License. See <a>https://www.openstreetmap.org/copyright</a>.
                    </Credit>
                    <ZoomBox>
                      <div><Plus c="#444" s={12} w={2.2} /></div>
                      <div><svg width="12" height="12" viewBox="0 0 14 14" stroke="#444" strokeWidth="2.2"><path d="M.5 7h13" /></svg></div>
                    </ZoomBox>
                  </MapFrame>
                  <Legend>
                    <LegendTitle>Total Sales ...</LegendTitle>
                    <LegendScale><Ramp /><RampLabels><span>9.735K</span><span>4.61K</span></RampLabels></LegendScale>
                  </Legend>
                </VisualBody>
                <HandleLayer>{handles.map(([x, y]) => <Handle key={x + y} $x={x} $y={y} />)}</HandleLayer>
              </Selected>
              <VisualTools>
                <ToolSlot $first><DoubleChevron c="#777" /></ToolSlot>
                <ToolSlot><Cog s={14} c="#888" w={1.9} /></ToolSlot>
                <ToolSlot><svg width="12" height="12" viewBox="0 0 12 12" fill="#777" stroke="#777"><path d="M7 1h4v4ZM1 7v4h4Z" stroke="none" /><path d="M7 5l3-3M5 7l-3 3" fill="none" strokeWidth="1.3" /></svg></ToolSlot>
                <ToolSlot><Pin c="#777" s={13} /></ToolSlot>
                <ToolSlot><svg width="14" height="4" viewBox="0 0 14 4" fill="#777"><circle cx="1.700" cy="2" r="1.4" /><circle cx="7" cy="2" r="1.4" /><circle cx="12.300" cy="2" r="1.4" /></svg></ToolSlot>
              </VisualTools>
            </SheetRow>
          </Sheet>
        </Main>
      </Body>
    </Page>
  );
}
